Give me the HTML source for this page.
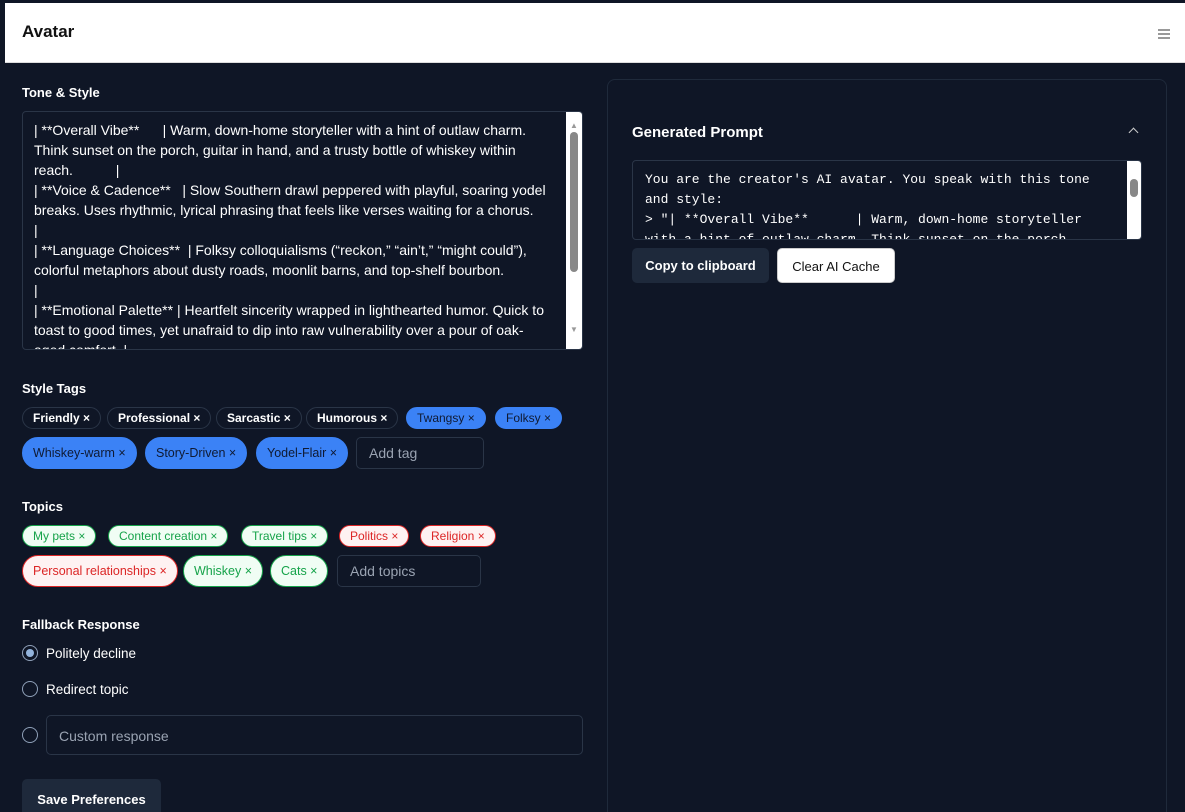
<!DOCTYPE html><html><head><style>
*{box-sizing:border-box;margin:0;padding:0}
html{overflow:hidden;width:1185px;height:812px}
body{width:1185px;height:812px;overflow:hidden;background:#0f1626;font-family:"Liberation Sans",sans-serif;color:#fff;position:relative}
.hdr{position:absolute;left:5px;top:3px;width:1180px;height:60px;background:#fff;border-bottom:1px solid #ddd}
.hdr h1{position:absolute;left:17px;top:19px;font-size:17px;font-weight:bold;color:#111}
.ham{position:absolute;right:15px;top:26px;width:12px}
.ham i{display:block;height:2px;background:#999;margin-bottom:2px}
.lbl{position:absolute;left:22px;font-size:13px;font-weight:bold}
.ta{position:absolute;left:22px;top:111px;width:561px;height:239px;border:1px solid #2a3547;border-radius:4px;overflow:hidden;padding:8px 30px 0 11px;font-size:14px;line-height:20px;color:#fff}
.sb{position:absolute;right:0;top:0;width:16px;height:100%;background:#fff}
.thumb{position:absolute;left:4px;top:20px;width:8px;height:140px;background:#888;border-radius:4px}
.tag{position:absolute;height:22px;border-radius:11px;font-size:12px;font-weight:bold;line-height:20px;padding:0 10px;border:1px solid #2a3547;white-space:nowrap}
.tag.b{background:#3b82f6;border-color:#3b82f6;color:#0f1a33;font-weight:normal}
.tag.l{height:32px;border-radius:16px;line-height:30px;font-size:12.5px}
.tag.g{background:#f0fdf4;border-color:#16a34a;color:#16a34a;font-weight:normal}
.tag.r{background:#fef2f2;border-color:#dc2626;color:#dc2626;font-weight:normal}
.inp{position:absolute;border:1px solid #2a3547;border-radius:5px;color:#9aa3b2;font-size:14px;padding-left:12px}
.rad{position:absolute;left:22px;width:16px;height:16px;border:1.5px solid #8fa0b8;border-radius:50%}
.rt{position:absolute;left:46px;font-size:13.5px}
.card{position:absolute;left:607px;top:79px;width:560px;height:760px;border:1px solid #1f2a3b;border-radius:8px}
.pt{position:absolute;left:632px;top:160px;width:510px;height:80px;border:1px solid #2a3547;border-radius:4px;overflow:hidden;padding:9px 24px 0 12px;font-family:"Liberation Mono",monospace;font-size:13px;line-height:20px;white-space:pre}
.btn{position:absolute;height:35px;border-radius:5px;font-size:13px;font-weight:bold;line-height:35px;text-align:center}
</style></head><body>
<div class="hdr"><h1>Avatar</h1><div class="ham"><i></i><i></i><i></i></div></div>
<div class="lbl" style="top:85px">Tone &amp; Style</div>
<div class="ta">| **Overall Vibe**&nbsp;&nbsp;&nbsp;&nbsp;&nbsp;&nbsp;| Warm, down-home storyteller with a hint of outlaw charm. Think sunset on the porch, guitar in hand, and a trusty bottle of whiskey within reach.&nbsp;&nbsp;&nbsp;&nbsp;&nbsp;&nbsp;&nbsp;&nbsp;&nbsp;&nbsp;&nbsp;|<br>| **Voice &amp; Cadence**&nbsp;&nbsp;&nbsp;| Slow Southern drawl peppered with playful, soaring yodel breaks. Uses rhythmic, lyrical phrasing that feels like verses waiting for a chorus.<br>|<br>| **Language Choices**&nbsp;&nbsp;| Folksy colloquialisms (“reckon,” “ain’t,” “might could”), colorful metaphors about dusty roads, moonlit barns, and top-shelf bourbon.<br>|<br>| **Emotional Palette** | Heartfelt sincerity wrapped in lighthearted humor. Quick to toast to good times, yet unafraid to dip into raw vulnerability over a pour of oak-aged comfort. |
<div class="sb"><div class="thumb"></div><div style="position:absolute;left:4px;top:4px;font-size:8px;color:#999">▲</div><div style="position:absolute;left:4px;top:208px;font-size:8px;color:#999">▼</div></div></div>
<div class="lbl" style="top:381px">Style Tags</div>
<div class="tag" style="left:22px;top:407px">Friendly ×</div>
<div class="tag" style="left:107px;top:407px">Professional ×</div>
<div class="tag" style="left:216px;top:407px">Sarcastic ×</div>
<div class="tag" style="left:306px;top:407px">Humorous ×</div>
<div class="tag b" style="left:406px;top:407px">Twangsy ×</div>
<div class="tag b" style="left:495px;top:407px">Folksy ×</div>
<div class="tag b l" style="left:22px;top:437px">Whiskey-warm ×</div>
<div class="tag b l" style="left:145px;top:437px">Story-Driven ×</div>
<div class="tag b l" style="left:256px;top:437px">Yodel-Flair ×</div>
<div class="inp" style="left:356px;top:437px;width:128px;height:32px;line-height:30px">Add tag</div>
<div class="lbl" style="top:499px">Topics</div>
<div class="tag g" style="left:22px;top:525px">My pets ×</div>
<div class="tag g" style="left:108px;top:525px">Content creation ×</div>
<div class="tag g" style="left:241px;top:525px">Travel tips ×</div>
<div class="tag r" style="left:339px;top:525px">Politics ×</div>
<div class="tag r" style="left:420px;top:525px">Religion ×</div>
<div class="tag r l" style="left:22px;top:555px">Personal relationships ×</div>
<div class="tag g l" style="left:183px;top:555px">Whiskey ×</div>
<div class="tag g l" style="left:270px;top:555px">Cats ×</div>
<div class="inp" style="left:337px;top:555px;width:144px;height:32px;line-height:30px">Add topics</div>
<div class="lbl" style="top:617px">Fallback Response</div>
<div class="rad" style="top:645px"><div style="position:absolute;left:2.5px;top:2.5px;width:8px;height:8px;border-radius:50%;background:#93b4dc"></div></div>
<div class="rt" style="top:646px">Politely decline</div>
<div class="rad" style="top:681px"></div>
<div class="rt" style="top:682px">Redirect topic</div>
<div class="rad" style="top:727px"></div>
<div class="inp" style="left:46px;top:715px;width:537px;height:40px;line-height:40px">Custom response</div>
<div class="btn" style="left:22px;top:779px;width:139px;height:45px;line-height:42px;background:#1e293b">Save Preferences</div>
<div class="card"></div>
<div style="position:absolute;left:632px;top:124px;font-size:15px;font-weight:bold">Generated Prompt</div>
<div style="position:absolute;left:1130px;top:129px;width:7px;height:7px;border-left:1.5px solid #ccc;border-top:1.5px solid #ccc;transform:rotate(45deg)"></div>
<div class="pt">You are the creator's AI avatar. You speak with this tone
and style:
&gt; "| **Overall Vibe**      | Warm, down-home storyteller
with a hint of outlaw charm. Think sunset on the porch<div class="sb" style="width:14px"><div class="thumb" style="left:3px;top:18px;height:18px"></div></div></div>
<div class="btn" style="left:632px;top:248px;width:137px;background:#1e293b">Copy to clipboard</div>
<div class="btn" style="left:777px;top:248px;width:118px;background:#fff;color:#111;font-weight:normal;border:1px solid #ccc">Clear AI Cache</div>
</body></html>
